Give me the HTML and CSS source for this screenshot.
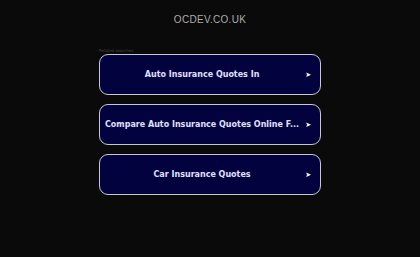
FILE: index.html
```html
<!DOCTYPE html>
<html>
<head>
<meta charset="utf-8">
<link rel="stylesheet" href="styles.css">
</head>
<body>
<div class="page">
  <div class="domain">OCDEV.CO.UK</div>
  <div class="results">
    <div class="label">Related searches</div>
    <a class="item" href="#"><span class="text">Auto Insurance Quotes In</span><span class="arrow">➤</span></a>
    <a class="item" href="#"><span class="text">Compare Auto Insurance Quotes Online F...</span><span class="arrow">➤</span></a>
    <a class="item" href="#"><span class="text">Car Insurance Quotes</span><span class="arrow">➤</span></a>
  </div>
</div>
</body>
</html>
```
FILE: styles.css
```css
html, body {
  margin: 0;
  padding: 0;
  background: #0a0a0a;
}
.page {
  width: 420px;
  height: 257px;
  display: flex;
  flex-direction: column;
  align-items: center;
  font-family: "DejaVu Sans", Verdana, sans-serif;
}
.domain {
  margin-top: 13px;
  font-family: "Liberation Sans", Arial, sans-serif;
  font-size: 10px;
  line-height: 13px;
  letter-spacing: 0.3px;
  color: #acacac;
}
.results {
  margin-top: 22px;
  width: 222px;
  display: flex;
  flex-direction: column;
  gap: 9px;
}
.label {
  font-size: 4px;
  line-height: 5px;
  color: #444;
  margin-bottom: -8px;
}
.item {
  box-sizing: border-box;
  height: 41px;
  border: 1.5px solid #c8c8d0;
  border-radius: 9px;
  background: #02023e;
  display: flex;
  align-items: center;
  padding: 0 9px 0 1px;
  text-decoration: none;
  color: #e0e0ff;
}
.text {
  flex: 1;
  text-align: center;
  font-size: 8px;
  font-weight: bold;
  letter-spacing: 0;
  white-space: nowrap;
}
.arrow {
  margin-left: 2px;
  font-size: 7px;
  color: #ffffff;
}
```
